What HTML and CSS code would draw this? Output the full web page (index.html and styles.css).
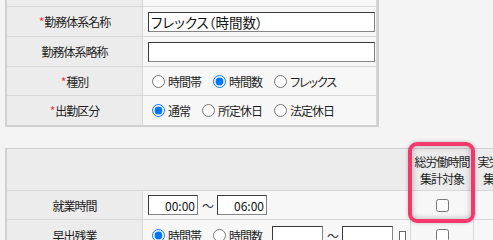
FILE: index.html
```html
<!DOCTYPE html>
<html lang="ja">
<head>
<meta charset="utf-8">
<title>勤務体系</title>
<link rel="stylesheet" href="styles.css">
</head>
<body>
<div class="page">
  <div class="form form-top">
    <div class="lbl"></div>
    <div class="val"></div>

    <div class="lbl"><span class="req">*</span>勤務体系名称</div>
    <div class="val"><input class="text wide name" type="text" value="フレックス（時間数）"></div>

    <div class="lbl">勤務体系略称</div>
    <div class="val"><input class="text wide" type="text" value=""></div>

    <div class="lbl"><span class="req">*</span>種別</div>
    <div class="val radios">
      <label class="opt"><input type="radio" name="kind">時間帯</label>
      <label class="opt"><input type="radio" name="kind" checked>時間数</label>
      <label class="opt"><input type="radio" name="kind">フレックス</label>
    </div>

    <div class="lbl last"><span class="req">*</span>出勤区分</div>
    <div class="val radios last">
      <label class="opt"><input type="radio" name="att" checked>通常</label>
      <label class="opt"><input type="radio" name="att">所定休日</label>
      <label class="opt"><input type="radio" name="att">法定休日</label>
    </div>
  </div>

  <div class="form form-bottom">
    <div class="head span2"></div>
    <div class="head col">総労働時間<br>集計対象</div>
    <div class="head col">実労働時間<br>集計対象</div>

    <div class="lbl">就業時間</div>
    <div class="val">
      <input class="text time" type="text" value="00:00"><span class="tilde">～</span><input class="text time" type="text" value="06:00">
    </div>
    <div class="chk"><input type="checkbox"></div>
    <div class="chk"><input type="checkbox"></div>

    <div class="lbl last">早出残業</div>
    <div class="val radios last">
      <label class="opt"><input type="radio" name="early" checked>時間帯</label>
      <label class="opt tight"><input type="radio" name="early">時間数</label>
      <input class="text time2" type="text" value=""><span class="tilde">～</span><input class="text time2" type="text" value=""><span class="mini"></span>
    </div>
    <div class="chk last"><input type="checkbox"></div>
    <div class="chk last"><input type="checkbox"></div>

    <div class="highlight"></div>
  </div>
</div>
</body>
</html>
```

FILE: styles.css
```css
html, body {
  margin: 0;
  padding: 0;
  overflow: hidden;
  background: #f4f4f4;
}

body {
  font-family: "Noto Sans CJK JP", "Noto Sans", sans-serif;
  font-size: 12px;
  letter-spacing: -1px;
  font-feature-settings: "palt";
  color: #1e1e1e;
}

.page {
  display: flex;
  flex-direction: column;
  align-items: flex-start;
}

.form {
  display: grid;
  border-style: solid;
  border-color: #d0d0d0;
  border-width: 1px 2px 2px 2px;
  background: #f7f7f7;
}

.form-top {
  margin: -24px 0 0 5px;
  grid-template-columns: 136px 234px;
  grid-template-rows: 30px 30px 30px 29px 29px;
}

.form-bottom {
  position: relative;
  margin: 21px 0 0 5px;
  grid-template-columns: 136px 268px 63px 63px;
  grid-template-rows: 42px 29px 31px;
}

.lbl, .val, .head, .chk {
  box-sizing: border-box;
  border-bottom: 1px solid #d8d8d8;
  display: flex;
  align-items: center;
}

.lbl {
  justify-content: center;
  background: #ececec;
  border-right: 1px solid #d8d8d8;
}

.val {
  padding-left: 5px;
  border-right: 1px solid #d8d8d8;
}

.last {
  border-bottom: none;
}

.req {
  color: #e2403c;
  margin-right: 1px;
}

.head {
  background: #ececec;
  border-right: 1px solid #d8d8d8;
}

.span2 {
  grid-column: span 2;
}

.col {
  justify-content: center;
  text-align: center;
  line-height: 17px;
  padding-top: 1px;
}

.chk {
  justify-content: center;
  border-right: 1px solid #d8d8d8;
}

.chk input {
  margin: 0;
  width: 13px;
  height: 13px;
}

.text {
  box-sizing: border-box;
  height: 20px;
  margin: 0;
  padding: 0 3px;
  border: 1px solid #858585;
  border-top-color: #3a3a3a;
  border-left-color: #3a3a3a;
  background: #fff;
  font-family: "Noto Sans CJK JP", "Noto Sans", sans-serif;
  font-size: 12px;
  letter-spacing: 0;
  font-feature-settings: "palt";
  color: #111;
  outline: none;
}

.name {
  font-size: 13.5px;
  padding-left: 2px;
}

.wide {
  width: 227px;
}

.time {
  width: 50px;
  text-align: right;
  padding-right: 2px;
}

.time2 {
  width: 51px;
}

.tilde {
  margin: 0 4px 0 4px;
  font-size: 12px;
  color: #333;
}

.radios {
  padding-left: 9px;
}

.opt {
  display: flex;
  align-items: center;
  margin-right: 12px;
  white-space: nowrap;
}

.opt.tight {
  margin-right: 10px;
}

.opt input {
  margin: 0 3px 0 0;
  width: 13px;
  height: 13px;
}

.mini {
  width: 7px;
  height: 10px;
  margin-left: 6px;
  box-sizing: border-box;
  border: 1px solid #666;
  background: #fff;
}

.highlight {
  position: absolute;
  left: 401px;
  top: -7px;
  width: 67px;
  height: 81px;
  box-sizing: border-box;
  border: 4px solid #f2386c;
  border-radius: 9px;
  box-shadow: inset 0 0 6px rgba(0, 0, 0, 0.28), 0 0 4px rgba(0, 0, 0, 0.2);
  pointer-events: none;
}
```
